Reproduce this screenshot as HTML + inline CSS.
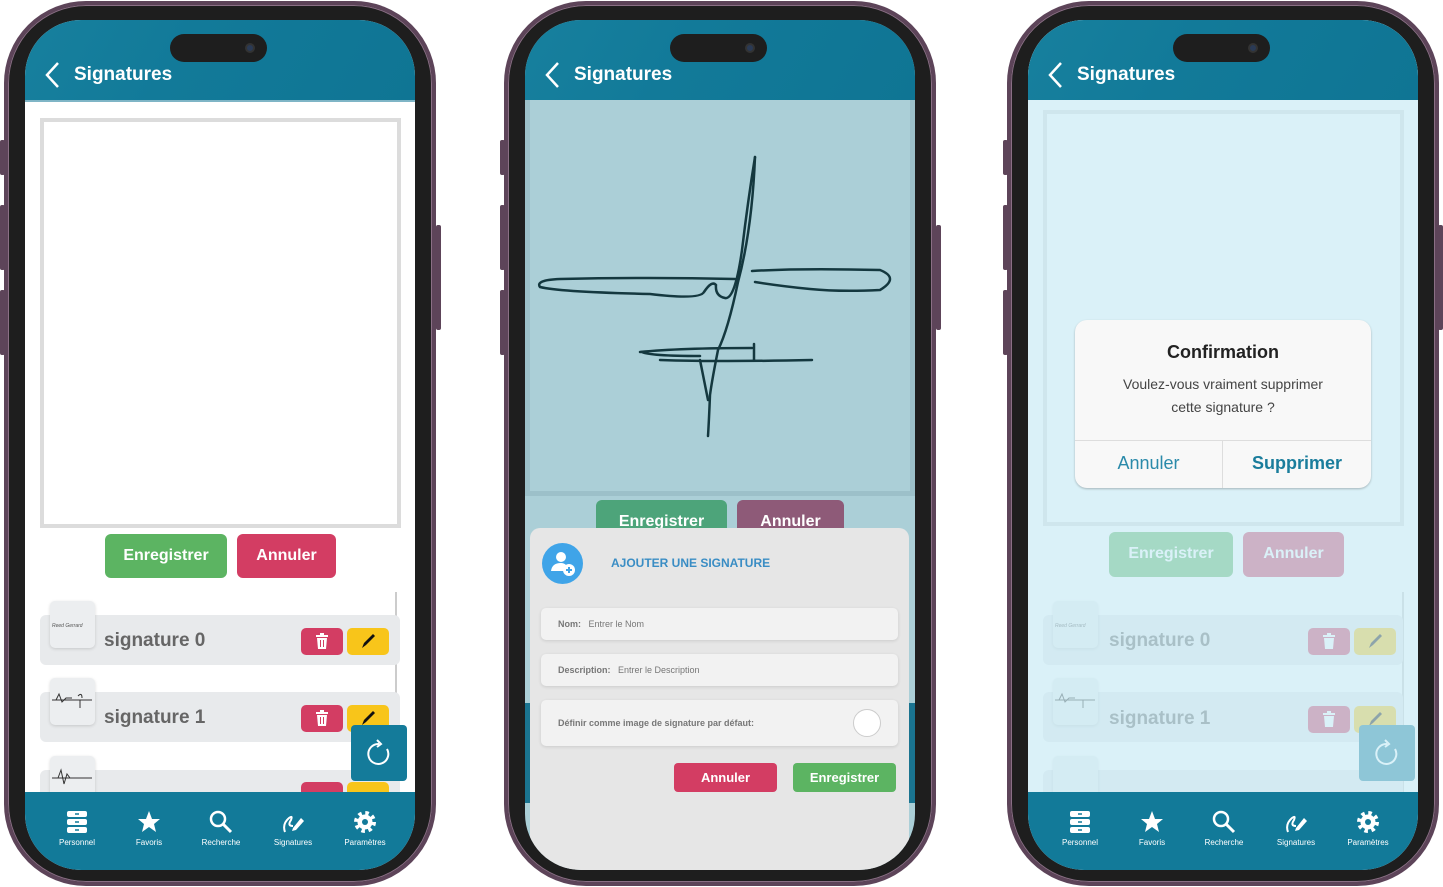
<!DOCTYPE html>
<html><head><meta charset="utf-8"><style>
*{box-sizing:border-box;margin:0;padding:0}
body{width:1443px;height:887px;background:#fff;position:relative;overflow:hidden;font-family:"Liberation Sans",sans-serif}
.ph{position:absolute;top:1px;width:432px;height:885px;border-radius:82px;background:#1e1e1e;border:4px solid #5d4459;box-shadow:inset 0 0 0 1px #8a6f85}
.btn{position:absolute;width:5px;background:#5d4459;border-radius:2px}
.scr{position:absolute;top:20px;width:390px;height:850px;border-radius:56px;overflow:hidden;background:#fff}
.hdr{position:absolute;left:0;top:0;width:390px;height:82px;background:linear-gradient(120deg,#17809e 0%,#127a99 40%,#0f7594 100%);border-bottom:2px solid #7fb5c6}
.hdr .t{position:absolute;left:49px;top:44px;color:#fff;font-weight:bold;font-size:19px}
.hdr svg{position:absolute;left:18px;top:40px}
.isl{position:absolute;left:145px;top:14px;width:97px;height:28px;border-radius:14px;background:#1e1e1e}
.isl i{position:absolute;right:12px;top:9px;width:10px;height:10px;border-radius:50%;background:#2a3a55;border:2px solid #333}
.canvas{position:absolute;left:15px;top:98px;width:361px;height:410px;border:4px solid #dcdcdc;background:#fff}
.b{position:absolute;height:44px;border-radius:6px;color:#fff;font-weight:bold;font-size:16px;text-align:center;line-height:44px}
.g{background:#5cb462}.r{background:#d33d63}
.row{position:absolute;left:15px;width:360px;height:50px;background:#e8eaec;border-radius:6px}
.th{position:absolute;left:25px;width:45px;height:47px;background:#eceef0;border-radius:5px;box-shadow:0 1px 3px rgba(0,0,0,.15)}
.nm{position:absolute;left:79px;font-size:19px;font-weight:bold;color:#666}
.tr{position:absolute;left:276px;width:42px;height:27px;background:#d33d63;border-radius:5px}
.pn{position:absolute;left:322px;width:42px;height:27px;background:#f8c51a;border-radius:5px}
.tr svg,.pn svg{position:absolute;left:13px;top:5px}
.nav{position:absolute;left:0;top:772px;width:390px;height:78px;background:#127a99}
.ni{position:absolute;top:18px;width:72px;text-align:center;color:#fff;font-size:8px}
.ni svg{display:block;margin:0 auto 4px}
.ref{position:absolute;left:326px;top:705px;width:56px;height:56px;background:#147b9a;border-radius:4px}
</style></head><body>

<div class="btn" style="left:0;top:140px;height:35px"></div>
<div class="btn" style="left:0;top:205px;height:65px"></div>
<div class="btn" style="left:0;top:290px;height:65px"></div>
<div class="btn" style="left:436px;top:225px;height:105px"></div>
<div class="btn" style="left:500px;top:140px;height:35px"></div>
<div class="btn" style="left:500px;top:205px;height:65px"></div>
<div class="btn" style="left:500px;top:290px;height:65px"></div>
<div class="btn" style="left:936px;top:225px;height:105px"></div>
<div class="btn" style="left:1003px;top:140px;height:35px"></div>
<div class="btn" style="left:1003px;top:205px;height:65px"></div>
<div class="btn" style="left:1003px;top:290px;height:65px"></div>
<div class="btn" style="left:1438px;top:225px;height:105px"></div>

<!-- PHONE 1 -->
<div class="ph" style="left:4px"></div>
<div class="scr" style="left:25px">
  <div class="hdr"><svg width="20" height="30"><path d="M15 3 L4 15 L15 27" stroke="#fff" stroke-width="2.5" fill="none"/></svg><div class="t">Signatures</div></div>
  <div class="canvas"></div>
  <div style="position:absolute;left:370px;top:572px;width:2px;height:200px;background:#ccc"></div>
  <div class="b g" style="left:80px;top:514px;width:122px">Enregistrer</div>
  <div class="b r" style="left:212px;top:514px;width:99px">Annuler</div>
  <div class="row" style="top:595px"></div><div class="th" style="top:581px"><span style="font-size:5px;color:#555;position:absolute;top:22px;left:2px;font-style:italic">Reed Gerrard</span></div>
  <div class="nm" style="top:610px">signature 0</div>
  <div class="tr" style="top:608px"><svg width="16" height="17"><rect x="2" y="2" width="12" height="2" fill="#fff"/><rect x="6" y="0" width="4" height="2" fill="#fff"/><path d="M3 5 H13 L12 16 H4Z" fill="#fff"/><path d="M6.5 7 V14 M9.5 7 V14" stroke="#d33d63"/></svg></div>
  <div class="pn" style="top:608px"><svg width="16" height="17"><path d="M2 15 L4 10 L13 1 L15 3 L6 12Z" fill="#111"/></svg></div>
  <div class="row" style="top:672px"></div><div class="th" style="top:658px"><svg width="45" height="40"><path d="M2 22 H42 M6 22 L9 16 L12 24 L16 20 H22 M30 22 V30 M28 18 Q32 14 32 20" stroke="#333" fill="none"/></svg></div>
  <div class="nm" style="top:687px">signature 1</div>
  <div class="tr" style="top:685px"><svg width="16" height="17"><rect x="2" y="2" width="12" height="2" fill="#fff"/><rect x="6" y="0" width="4" height="2" fill="#fff"/><path d="M3 5 H13 L12 16 H4Z" fill="#fff"/><path d="M6.5 7 V14 M9.5 7 V14" stroke="#d33d63"/></svg></div>
  <div class="pn" style="top:685px"><svg width="16" height="17"><path d="M2 15 L4 10 L13 1 L15 3 L6 12Z" fill="#111"/></svg></div>
  <div class="row" style="top:750px"></div><div class="th" style="top:736px"><svg width="45" height="40"><path d="M2 22 H42 M8 22 L11 14 L14 28 L17 18 L20 22 H24" stroke="#333" fill="none"/></svg></div>
  <div class="tr" style="top:762px"></div><div class="pn" style="top:762px"></div>
  <div class="ref"><svg width="56" height="56"><path d="M36 24 A10 10 0 1 1 28 19" stroke="#fff" stroke-width="2" fill="none"/><path d="M26 15 L30 19 L26 22" stroke="#fff" stroke-width="2" fill="none"/></svg></div>
  <div class="nav">
   <div class="ni" style="left:16px"><svg width="22" height="24"><rect x="1" y="1" width="20" height="6" rx="2" fill="#fff"/><rect x="1" y="9" width="20" height="6" rx="2" fill="#fff"/><rect x="1" y="17" width="20" height="6" rx="2" fill="#fff"/><path d="M9 4 H13 M9 12 H13 M9 20 H13" stroke="#127a99" stroke-width="1.5"/></svg>Personnel</div>
   <div class="ni" style="left:88px"><svg width="24" height="24"><path d="M12 1 L15 9 L23 9 L17 14 L19 22 L12 17 L5 22 L7 14 L1 9 L9 9Z" fill="#fff"/></svg>Favoris</div>
   <div class="ni" style="left:160px"><svg width="24" height="24"><circle cx="9" cy="9" r="7" stroke="#fff" stroke-width="2.5" fill="none"/><path d="M14 14 L22 22" stroke="#fff" stroke-width="3"/></svg>Recherche</div>
   <div class="ni" style="left:232px"><svg width="24" height="24"><path d="M4 22 Q1 14 8 8 Q12 5 10 10 Q6 16 12 16" stroke="#fff" stroke-width="2" fill="none"/><path d="M12 18 L20 8 L23 11 L15 20 L11 21Z" fill="#fff"/></svg>Signatures</div>
   <div class="ni" style="left:304px"><svg width="24" height="24"><circle cx="12" cy="12" r="9" stroke="#fff" stroke-width="4" stroke-dasharray="3.5 3.57" fill="none"/><circle cx="12" cy="12" r="7.5" fill="#fff"/><circle cx="12" cy="12" r="3" fill="#127a99"/></svg>Paramètres</div>
  </div>
  <div class="isl"><i></i></div>
</div>

<!-- PHONE 2 -->
<div class="ph" style="left:504px"></div>
<div class="scr" style="left:525px;background:#abcfd7">
  <div class="hdr" style="height:80px;border-bottom:none"><svg width="20" height="30"><path d="M15 3 L4 15 L15 27" stroke="#fff" stroke-width="2.5" fill="none"/></svg><div class="t">Signatures</div></div>
  <div style="position:absolute;left:0;top:80px;width:390px;height:396px;border:5px solid #9cc0c9;border-top:none;background:#abcfd7"></div>
  <div class="b" style="left:71px;top:480px;width:131px;background:#4da47a">Enregistrer</div>
  <div class="b" style="left:212px;top:480px;width:107px;background:#8e5a78">Annuler</div>
  <div style="position:absolute;left:0;top:683px;width:390px;height:100px;background:#1a7490"></div>
  <div style="position:absolute;left:5px;top:508px;width:379px;height:350px;background:#e6e6e6;border-radius:10px">
    <div style="position:absolute;left:12px;top:15px;width:41px;height:41px;border-radius:50%;background:#3fa4e8"><svg width="41" height="41"><circle cx="19" cy="14" r="5" fill="#fff"/><path d="M9 28 Q10 20 19 20 Q22 20 24 22 L22 28Z" fill="#fff"/><circle cx="27" cy="27" r="6" fill="#fff"/><path d="M27 24 V30 M24 27 H30" stroke="#3fa4e8" stroke-width="2"/></svg></div>
    <div style="position:absolute;left:81px;top:28px;color:#3a8dc4;font-weight:bold;font-size:12px">AJOUTER UNE SIGNATURE</div>
    <div style="position:absolute;left:11px;top:80px;width:357px;height:32px;background:#f2f2f2;border-radius:5px;box-shadow:0 1px 3px rgba(0,0,0,.12);font-size:9px;color:#777;line-height:32px;padding-left:17px"><b>Nom:</b>&nbsp;&nbsp;&nbsp;Entrer le Nom</div>
    <div style="position:absolute;left:11px;top:126px;width:357px;height:32px;background:#f2f2f2;border-radius:5px;box-shadow:0 1px 3px rgba(0,0,0,.12);font-size:9px;color:#777;line-height:32px;padding-left:17px"><b>Description:</b>&nbsp;&nbsp;&nbsp;Entrer le Description</div>
    <div style="position:absolute;left:11px;top:172px;width:357px;height:46px;background:#f2f2f2;border-radius:5px;box-shadow:0 1px 3px rgba(0,0,0,.12);font-size:9px;color:#777;line-height:46px;padding-left:17px"><b>Définir comme image de signature par défaut:</b><div style="position:absolute;right:17px;top:9px;width:28px;height:28px;border-radius:50%;background:#fff;border:1px solid #ccc"></div></div>
    <div class="b r" style="left:144px;top:235px;width:103px;height:29px;line-height:29px;font-size:13px;border-radius:4px">Annuler</div>
    <div class="b g" style="left:263px;top:235px;width:103px;height:29px;line-height:29px;font-size:13px;border-radius:4px">Enregistrer</div>
  </div>
  <div class="isl"><i></i></div>
</div>
<svg style="position:absolute;left:0;top:0" width="1443" height="887"><g stroke="#14383f" stroke-width="2.5" fill="none" stroke-linecap="round">
<path d="M755 157 Q748 200 742 250 Q735 300 725 298 Q715 296 716 285 Q712 280 704 292 Q700 300 650 294 Q560 292 540 287 Q535 280 560 279 Q650 277 735 279"/>
<path d="M755 157 Q752 230 738 282 Q728 330 718 350 Q712 380 710 395 Q709 420 708 436"/>
<path d="M752 271 Q800 268 880 270 Q900 278 880 290 Q840 292 810 289 Q780 286 755 282"/>
<path d="M640 352 Q680 348 752 348 M754 344 V360 M660 360 Q720 362 812 360 M700 360 Q704 380 708 400"/>
<path d="M642 352 Q650 356 700 356"/>
</g></svg>

<!-- PHONE 3 -->
<div class="ph" style="left:1007px"></div>
<div class="scr" style="left:1028px">
  <div class="canvas" style="top:90px;height:416px"></div>
  <div style="position:absolute;left:374px;top:572px;width:2px;height:200px;background:#ccc"></div>
  <div class="b g" style="left:81px;top:512px;width:124px;height:45px">Enregistrer</div>
  <div class="b r" style="left:215px;top:512px;width:101px;height:45px">Annuler</div>
  <div class="row" style="top:595px;left:15px"></div><div class="th" style="top:581px"><span style="font-size:5px;color:#555;position:absolute;top:22px;left:2px;font-style:italic">Reed Gerrard</span></div>
  <div class="nm" style="top:610px;left:81px">signature 0</div>
  <div class="tr" style="top:608px;left:280px"><svg width="16" height="17"><rect x="2" y="2" width="12" height="2" fill="#fff"/><rect x="6" y="0" width="4" height="2" fill="#fff"/><path d="M3 5 H13 L12 16 H4Z" fill="#fff"/></svg></div>
  <div class="pn" style="top:608px;left:326px"><svg width="16" height="17"><path d="M2 15 L4 10 L13 1 L15 3 L6 12Z" fill="#111"/></svg></div>
  <div class="row" style="top:672px"></div><div class="th" style="top:658px"><svg width="45" height="40"><path d="M2 22 H42 M6 22 L9 16 L12 24 L16 20 H22 M30 22 V30" stroke="#333" fill="none"/></svg></div>
  <div class="nm" style="top:688px;left:81px">signature 1</div>
  <div class="tr" style="top:686px;left:280px"><svg width="16" height="17"><rect x="2" y="2" width="12" height="2" fill="#fff"/><rect x="6" y="0" width="4" height="2" fill="#fff"/><path d="M3 5 H13 L12 16 H4Z" fill="#fff"/></svg></div>
  <div class="pn" style="top:686px;left:326px"><svg width="16" height="17"><path d="M2 15 L4 10 L13 1 L15 3 L6 12Z" fill="#111"/></svg></div>
  <div class="row" style="top:750px"></div><div class="th" style="top:736px"></div>
  <div class="ref" style="left:331px"><svg width="56" height="56"><path d="M36 24 A10 10 0 1 1 28 19" stroke="#fff" stroke-width="2" fill="none"/><path d="M26 15 L30 19 L26 22" stroke="#fff" stroke-width="2" fill="none"/></svg></div>
  <div style="position:absolute;left:0;top:0;width:390px;height:772px;background:rgba(200,235,245,.68)"></div>
  <div class="hdr" style="height:80px;border-bottom:none"><svg width="20" height="30"><path d="M15 3 L4 15 L15 27" stroke="#fff" stroke-width="2.5" fill="none"/></svg><div class="t">Signatures</div></div>
  <div style="position:absolute;left:47px;top:300px;width:296px;height:168px;background:#f8f8f8;border-radius:12px;box-shadow:0 1px 2px rgba(0,0,0,.25)">
    <div style="position:absolute;left:0;width:296px;top:22px;text-align:center;font-weight:bold;font-size:18px;color:#222">Confirmation</div>
    <div style="position:absolute;left:0;width:296px;top:53px;text-align:center;font-size:14px;color:#444;line-height:23px">Voulez-vous vraiment supprimer<br>cette signature ?</div>
    <div style="position:absolute;left:0;top:120px;width:296px;height:1px;background:#ddd"></div>
    <div style="position:absolute;left:147px;top:120px;width:1px;height:48px;background:#ddd"></div>
    <div style="position:absolute;left:0;width:147px;top:133px;text-align:center;font-size:18px;color:#2a8aaa">Annuler</div>
    <div style="position:absolute;left:148px;width:148px;top:133px;text-align:center;font-size:18px;font-weight:bold;color:#1a7d9c">Supprimer</div>
  </div>
  <div class="nav">
   <div class="ni" style="left:16px"><svg width="22" height="24"><rect x="1" y="1" width="20" height="6" rx="2" fill="#fff"/><rect x="1" y="9" width="20" height="6" rx="2" fill="#fff"/><rect x="1" y="17" width="20" height="6" rx="2" fill="#fff"/><path d="M9 4 H13 M9 12 H13 M9 20 H13" stroke="#127a99" stroke-width="1.5"/></svg>Personnel</div>
   <div class="ni" style="left:88px"><svg width="24" height="24"><path d="M12 1 L15 9 L23 9 L17 14 L19 22 L12 17 L5 22 L7 14 L1 9 L9 9Z" fill="#fff"/></svg>Favoris</div>
   <div class="ni" style="left:160px"><svg width="24" height="24"><circle cx="9" cy="9" r="7" stroke="#fff" stroke-width="2.5" fill="none"/><path d="M14 14 L22 22" stroke="#fff" stroke-width="3"/></svg>Recherche</div>
   <div class="ni" style="left:232px"><svg width="24" height="24"><path d="M4 22 Q1 14 8 8 Q12 5 10 10 Q6 16 12 16" stroke="#fff" stroke-width="2" fill="none"/><path d="M12 18 L20 8 L23 11 L15 20 L11 21Z" fill="#fff"/></svg>Signatures</div>
   <div class="ni" style="left:304px"><svg width="24" height="24"><circle cx="12" cy="12" r="9" stroke="#fff" stroke-width="4" stroke-dasharray="3.5 3.57" fill="none"/><circle cx="12" cy="12" r="7.5" fill="#fff"/><circle cx="12" cy="12" r="3" fill="#127a99"/></svg>Paramètres</div>
  </div>
  <div class="isl"><i></i></div>
</div>
</body></html>
